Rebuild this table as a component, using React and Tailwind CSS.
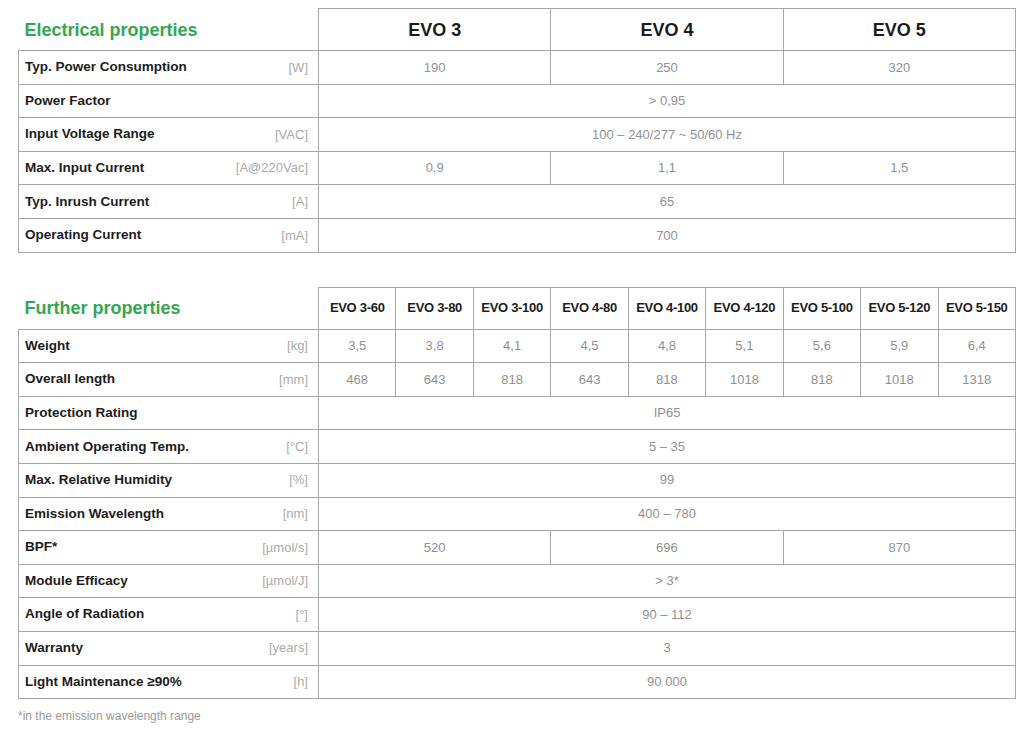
import React from "react";

const electrical = [
  { label: "Typ. Power Consumption", unit: "[W]", cells: [["190", 1], ["250", 1], ["320", 1]] },
  { label: "Power Factor", unit: "", cells: [["> 0,95", 3]] },
  { label: "Input Voltage Range", unit: "[VAC]", cells: [["100 – 240/277 ~ 50/60 Hz", 3]] },
  { label: "Max. Input Current", unit: "[A@220Vac]", cells: [["0,9", 1], ["1,1", 1], ["1,5", 1]] },
  { label: "Typ. Inrush Current", unit: "[A]", cells: [["65", 3]] },
  { label: "Operating Current", unit: "[mA]", cells: [["700", 3]] },
];

const models = ["EVO 3-60", "EVO 3-80", "EVO 3-100", "EVO 4-80", "EVO 4-100", "EVO 4-120", "EVO 5-100", "EVO 5-120", "EVO 5-150"];

const further = [
  { label: "Weight", unit: "[kg]", cells: ["3,5", "3,8", "4,1", "4,5", "4,8", "5,1", "5,6", "5,9", "6,4"].map(v => [v, 1]) },
  { label: "Overall length", unit: "[mm]", cells: ["468", "643", "818", "643", "818", "1018", "818", "1018", "1318"].map(v => [v, 1]) },
  { label: "Protection Rating", unit: "", cells: [["IP65", 9]] },
  { label: "Ambient Operating Temp.", unit: "[°C]", cells: [["5 – 35", 9]] },
  { label: "Max. Relative Humidity", unit: "[%]", cells: [["99", 9]] },
  { label: "Emission Wavelength", unit: "[nm]", cells: [["400 – 780", 9]] },
  { label: "BPF*", unit: "[µmol/s]", cells: [["520", 3], ["696", 3], ["870", 3]] },
  { label: "Module Efficacy", unit: "[µmol/J]", cells: [["> 3*", 9]] },
  { label: "Angle of Radiation", unit: "[°]", cells: [["90 – 112", 9]] },
  { label: "Warranty", unit: "[years]", cells: [["3", 9]] },
  { label: "Light Maintenance ≥90%", unit: "[h]", cells: [["90 000", 9]] },
];

const cell = "border border-[#a6a6a6]";

const BodyRow = ({ row }) => (
  <tr className="h-[33.6px]">
    <td className={`${cell} px-[6px]`}>
      <div className="flex items-center justify-between pr-[4px]">
        <span className="text-[13.5px] font-bold text-[#1c1c1c]">{row.label}</span>
        <span className="text-[13px] text-[#ababab]">{row.unit}</span>
      </div>
    </td>
    {row.cells.map(([v, span], i) => (
      <td key={i} colSpan={span} className={`${cell} text-center text-[13px] text-[#919191]`}>
        {v}
      </td>
    ))}
  </tr>
);

export default function App() {
  return (
    <div className="bg-white w-[1024px] h-[737px] pt-[8px] pl-[18px]" style={{ fontFamily: '"Liberation Sans", Arial, sans-serif' }}>
      <table className="w-[998px] table-fixed border-collapse">
        <colgroup>
          <col className="w-[300px]" />
          <col />
          <col />
          <col />
        </colgroup>
        <thead>
          <tr className="h-[42px]">
            <th className="pl-[6px] pt-[3px] text-left text-[18px] font-bold text-[#35a64f]">Electrical properties</th>
            {["EVO 3", "EVO 4", "EVO 5"].map(m => (
              <th key={m} className={`${cell} pt-[2px] text-center text-[18px] font-bold text-[#1c1c1c]`}>{m}</th>
            ))}
          </tr>
        </thead>
        <tbody>
          {electrical.map(r => <BodyRow key={r.label} row={r} />)}
        </tbody>
      </table>

      <table className="mt-[34px] w-[998px] table-fixed border-collapse">
        <colgroup>
          <col className="w-[300px]" />
          {models.map(m => <col key={m} />)}
        </colgroup>
        <thead>
          <tr className="h-[42px]">
            <th className="pl-[6px] pt-[2px] text-left text-[18px] font-bold text-[#35a64f]">Further properties</th>
            {models.map(m => (
              <th key={m} className={`${cell} text-center text-[13px] font-bold tracking-[-0.3px] text-[#1c1c1c] whitespace-nowrap`}>{m}</th>
            ))}
          </tr>
        </thead>
        <tbody>
          {further.map(r => <BodyRow key={r.label} row={r} />)}
        </tbody>
      </table>

      <p className="mt-[8px] text-[12px] text-[#9a9a9a]">*in the emission wavelength range</p>
    </div>
  );
}
